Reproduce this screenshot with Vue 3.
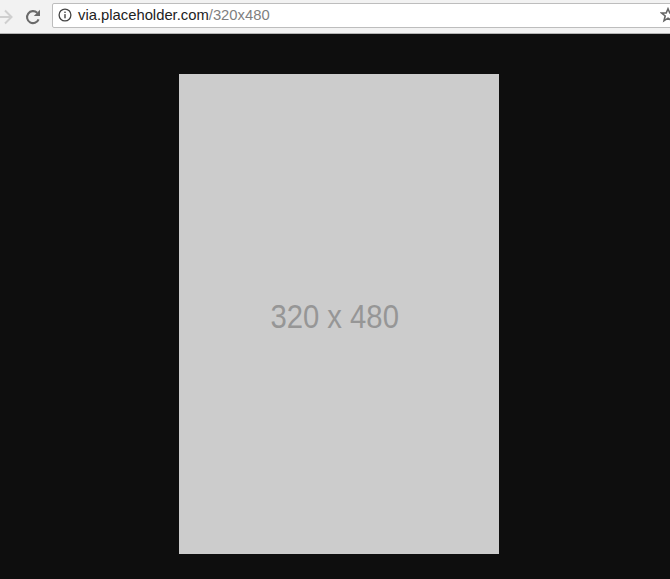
<template>
  <div class="window">
    <div class="toolbar">
      <!-- Back arrow is cut off by the window edge -->
      <svg class="nav-icon forward" width="14" height="16" viewBox="0 0 14 16">
        <path d="M0 8H12.5M6 1.5L12.5 8L6 14.5" fill="none" stroke="#cfcfcf" stroke-width="2" />
      </svg>
      <svg class="nav-icon reload" width="16" height="16" viewBox="0 0 16 16">
        <path d="M13.6 10.4A6 6 0 1 1 12.2 3.8" fill="none" stroke="#6a6a6a" stroke-width="2.1" />
        <path d="M15 0.8V7H8.8Z" fill="#6a6a6a" />
      </svg>
      <div class="omnibox">
        <svg class="info" width="14" height="14" viewBox="0 0 14 14">
          <circle cx="7" cy="7" r="5.9" fill="none" stroke="#444" stroke-width="1.3" />
          <rect x="6.3" y="6.1" width="1.4" height="4.2" fill="#444" />
          <rect x="6.3" y="3.6" width="1.4" height="1.4" fill="#444" />
        </svg>
        <span class="host">via.placeholder.com</span><span class="path">/320x480</span>
        <svg class="star" width="16" height="16" viewBox="0 0 16 16">
          <path d="M8 1.8L9.8 6H14.4L10.8 9L12 13.8L8 11.2L4 13.8L5.2 9L1.6 6H6.2Z" fill="none" stroke="#666" stroke-width="1.6" />
        </svg>
      </div>
    </div>
    <div class="stage">
      <div class="placeholder">
        <span class="dimensions">320 x 480</span>
      </div>
    </div>
  </div>
</template>

<script setup>
</script>

<style>
html, body {
  margin: 0;
  background: #0e0e0e;
  overflow: hidden;
}
</style>

<style scoped>
.window {
  width: 670px;
  height: 579px;
  overflow: hidden;
  display: flex;
  flex-direction: column;
  font-family: "Liberation Sans", Arial, sans-serif;
}

.toolbar {
  flex: none;
  height: 33px;
  display: flex;
  align-items: center;
  background: #f2f2f2;
  border-bottom: 1px solid #b4b4b4;
}

.nav-icon { flex: none; }
.forward { margin-left: -1px; }
.reload { margin-left: 12px; }

.omnibox {
  flex: none;
  width: 640px;
  height: 25px;
  margin-left: 11px;
  margin-top: -3px;
  display: flex;
  align-items: center;
  background: #fff;
  border: 1px solid #bdbdbd;
  border-radius: 2px;
  box-sizing: border-box;
  font-size: 14.8px;
}

.info { flex: none; margin-left: 5px; margin-right: 6px; }
.host { color: #222; }
.path { color: #7f7f7f; }
.star { flex: none; margin-left: auto; margin-right: 15px; }

.stage {
  flex: 1;
  background: #0e0e0e;
  padding: 40px 0 0 179px;
}

.placeholder {
  width: 320px;
  height: 480px;
  box-sizing: border-box;
  padding: 4px 8px 0 0;
  display: flex;
  align-items: center;
  justify-content: center;
  background: #cccccc;
  color: #969696;
  font-size: 34px;
}

/* the original glyphs are narrower than Arial */
.dimensions {
  display: inline-block;
  white-space: nowrap;
  transform: scaleX(0.86);
}
</style>
